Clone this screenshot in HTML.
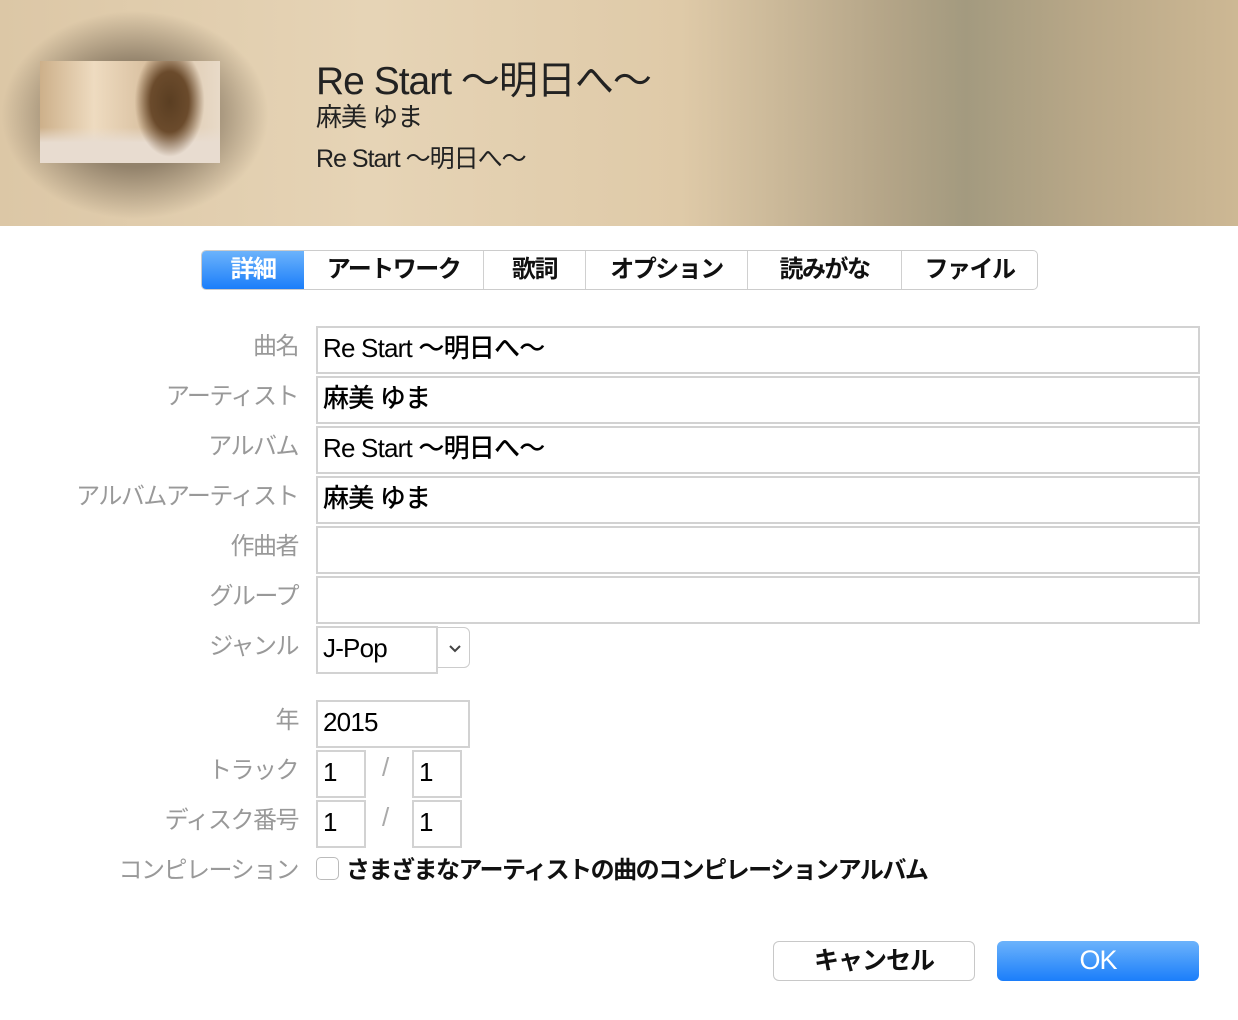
<!DOCTYPE html><html><head><meta charset="utf-8"><style>
*{margin:0;padding:0;box-sizing:border-box}
body{width:1238px;height:1020px;background:#fff;position:relative;overflow:hidden;font-family:"Liberation Sans","Noto Sans CJK JP",sans-serif}
.hdr{position:absolute;left:0;top:0;width:1238px;height:226px;background:linear-gradient(90deg,#dcc7a6 0%,#e6d4b6 30%,#dfcaa8 55%,#b3a487 72%,#a39a7f 78%,#b9a888 88%,#cdb894 100%)}
.glow{position:absolute;left:0px;top:10px;width:270px;height:210px;border-radius:50%;background:radial-gradient(ellipse at center,rgba(120,105,85,.75) 35%,rgba(150,130,100,0) 70%)}
.art{position:absolute;left:40px;top:61px;width:180px;height:102px;background:radial-gradient(ellipse 35px 55px at 72% 40%,#5a3e22 0,#6b4b2c 55%,rgba(0,0,0,0) 100%),linear-gradient(180deg,rgba(0,0,0,0) 65%,#e8dcd0 80%),linear-gradient(90deg,#cdb08a,#eedbc0 30%,#d9c0a0 60%,#e8dac8)}
.t{position:absolute;left:316px;color:#222;white-space:nowrap;letter-spacing:-1px}
.tabs{position:absolute;left:201px;top:250px;height:40px;display:flex;border:1px solid #ccc;border-radius:5px;overflow:hidden;background:#fff}
.tabs div{height:38px;line-height:38px;text-align:center;font-size:24px;font-weight:bold;border-left:1px solid #d0d0d0;color:#111;letter-spacing:-1.5px}
.tabs div.on{background:linear-gradient(#6cb3fb,#1b7efa);color:#fff;border-left:none}
.lb{position:absolute;right:940px;font-size:24px;color:#999;white-space:nowrap;text-align:right;letter-spacing:-1.5px}
.f{position:absolute;border:2px solid #d2d2d2;font-size:26px;padding-left:5px;line-height:40px;color:#000;letter-spacing:-0.8px;font-weight:500}
.sl{position:absolute;left:382px;font-size:26px;color:#aaa}
.btn{position:absolute;top:941px;width:202px;height:40px;border-radius:6px;font-size:25px;text-align:center;line-height:38px;font-weight:bold;letter-spacing:-1px}
</style></head><body>
<div class="hdr"><div class="glow"></div><div class="art"></div>
<div class="t" style="top:50px;font-size:39px">Re Start 〜明日へ〜</div>
<div class="t" style="top:97px;font-size:26px">麻美 ゆま</div>
<div class="t" style="top:139px;font-size:25px">Re Start 〜明日へ〜</div></div>
<div class="tabs"><div class="on" style="width:102px">詳細</div><div style="width:179px;border-left:none">アートワーク</div><div style="width:102px">歌詞</div><div style="width:162px">オプション</div><div style="width:154px">読みがな</div><div style="width:136px">ファイル</div></div>
<div class="lb" style="top:326px">曲名</div>
<div class="lb" style="top:376px">アーティスト</div>
<div class="lb" style="top:426px">アルバム</div>
<div class="lb" style="top:476px">アルバムアーティスト</div>
<div class="lb" style="top:526px">作曲者</div>
<div class="lb" style="top:576px">グループ</div>
<div class="lb" style="top:626px">ジャンル</div>
<div class="lb" style="top:700px">年</div>
<div class="lb" style="top:750px">トラック</div>
<div class="lb" style="top:800px">ディスク番号</div>
<div class="lb" style="top:850px">コンピレーション</div>
<div class="f" style="left:316px;top:326px;width:884px;height:48px">Re Start 〜明日へ〜</div>
<div class="f" style="left:316px;top:376px;width:884px;height:48px">麻美 ゆま</div>
<div class="f" style="left:316px;top:426px;width:884px;height:48px">Re Start 〜明日へ〜</div>
<div class="f" style="left:316px;top:476px;width:884px;height:48px">麻美 ゆま</div>
<div class="f" style="left:316px;top:526px;width:884px;height:48px"></div>
<div class="f" style="left:316px;top:576px;width:884px;height:48px"></div>
<div style="position:absolute;left:430px;top:627px;width:40px;height:41px;border:1px solid #ccc;border-radius:6px;background:#fff"><svg width="40" height="40" style="position:absolute;left:9px;top:0"><path d="M10 18l5 5 5-5" stroke="#444" stroke-width="2" fill="none"/></svg></div>
<div class="f" style="left:316px;top:626px;width:122px;height:48px;background:#fff">J-Pop</div>
<div class="f" style="left:316px;top:700px;width:154px;height:48px">2015</div>
<div class="f" style="left:316px;top:750px;width:50px;height:48px">1</div>
<div class="sl" style="top:752px">/</div>
<div class="f" style="left:412px;top:750px;width:50px;height:48px">1</div>
<div class="f" style="left:316px;top:800px;width:50px;height:48px">1</div>
<div class="sl" style="top:802px">/</div>
<div class="f" style="left:412px;top:800px;width:50px;height:48px">1</div>
<div style="position:absolute;left:316px;top:857px;width:23px;height:23px;border:1px solid #bbb;border-radius:5px"></div>
<div style="position:absolute;left:346px;top:850px;font-size:24px;font-weight:bold;color:#111;letter-spacing:-1.5px;white-space:nowrap">さまざまなアーティストの曲のコンピレーションアルバム</div>
<div class="btn" style="left:773px;border:1px solid #c8c8c8;background:#fff;color:#111">キャンセル</div>
<div class="btn" style="left:997px;background:linear-gradient(#6cb3fb,#1b7efa);color:#fff;font-weight:normal;font-size:27px">OK</div>
</body></html>
